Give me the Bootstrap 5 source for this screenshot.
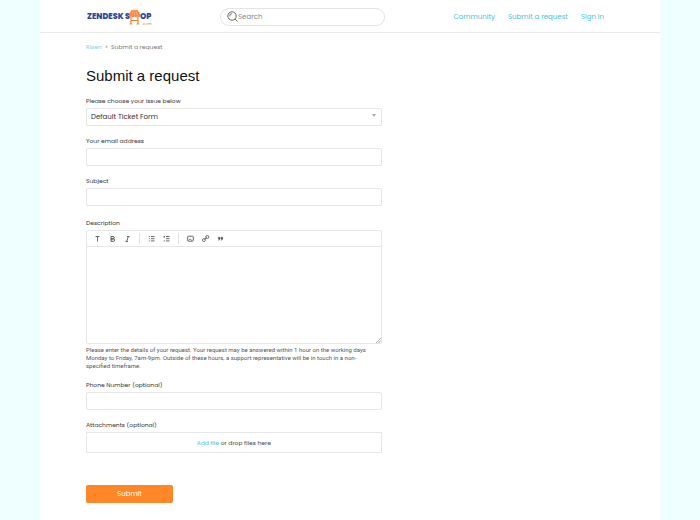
<!DOCTYPE html>
<html lang="en">
<head>
<meta charset="utf-8">
<meta name="viewport" content="width=device-width, initial-scale=1">
<title>Submit a request</title>
<link href="https://cdn.jsdelivr.net/npm/bootstrap@5.3.0/dist/css/bootstrap.min.css" rel="stylesheet">
<style>
body{background:#efffff;font-family:Poppins,Inter,sans-serif;font-size:6px;line-height:10px;color:#444}
a{color:#48c2dc;text-decoration:none}
.shell{margin:0 40px;background:#fff;min-height:100vh}
.site-head{height:33px;border-bottom:1px solid #ebebeb;padding:1px 56px 0 47px}
.logo{position:relative;color:#2c4799;font-weight:800;font-size:8px;flex:0 0 133px}
.logo svg{width:13px;height:16px;margin:0 -1px 0 -2px}
.logo .suffix{position:absolute;left:55px;top:13px;font-size:4px;line-height:4px;color:#f47c30;font-weight:400}
.search{flex:0 0 32%;width:32%;height:18px;border:1px solid #e4e4e4;border-radius:9px;padding:0 6px}
.search svg{flex:none;width:11px;height:11px}
.search input{border:0;outline:0;background:none;font-size:7px;min-width:0;padding:0;color:#555}
.search input::placeholder{color:#888}
.site-nav{gap:13px;font-size:7px;white-space:nowrap}
.content{padding:9px 46px 16px}
.crumbs{color:#777;gap:3px}
.crumbs a{color:#79d3e6}
h1{font-family:"Liberation Sans",Arial,sans-serif;font-size:15px;font-weight:400;line-height:20px;margin:14px 0 0;color:#111}
form{width:56%}
.field{margin-top:10px}
.field label{display:block;margin-bottom:2px;color:#333}
.spaced{margin-top:12px}
.box{display:block;width:100%;height:18px;border:1px solid #e6e6e6;border-radius:2px;background-color:#fff;padding:0 4px;font-size:7px;line-height:14px;color:#333}
.choice{position:relative}
.choice select{appearance:none}
.choice svg{position:absolute;right:6px;top:6px;width:4px;height:3px;pointer-events:none}
.editor{border:1px solid #e6e6e6;border-radius:2px}
.tools{height:16px;border-bottom:1px solid #e6e6e6;padding:0 6px}
.tools button{border:0;background:none;padding:0;width:9px;height:9px;margin-right:6px;line-height:0}
.tools svg{width:9px;height:9px;fill:none;stroke:#555;stroke-width:1}
.tools .bar{width:1px;height:11px;background:#e2e2e2;margin:0 7px 0 1px}
.editor textarea{display:block;width:100%;height:96px;border:0;outline:0;padding:4px;resize:none}
.grip{position:absolute;right:0;bottom:0;width:5px;height:5px}
.hint{font-family:Roboto,sans-serif;font-size:6px;line-height:8px;margin:2px 0 0;padding-right:8px;color:#555}
.drop{height:21px;border:1px solid #e6e6e6}
.send{width:87px;height:18px;margin-top:32px;padding:0;border:0;border-radius:2px;background:#ff8728;color:#fff;font-size:7px;line-height:18px}
.send:hover{background:#f07a1c;color:#fff}
</style>
</head>
<body>
<div class="shell">
  <header class="site-head d-flex align-items-center">
    <a class="logo d-flex align-items-center" href="#" aria-label="Zendesk Shop"><span>ZENDESK&nbsp;S</span><svg viewBox="0 0 13 16" aria-hidden="true"><path d="M3 .8h7v2.400H3z" fill="#ff9a50"/><path d="M2 2.800h9l1.300 3.700a1.400 1.400 0 0 1-2.800.3 1.500 1.500 0 0 1-3 0 1.500 1.500 0 0 1-3 0A1.400 1.400 0 0 1 .7 6.500z" fill="#fb8440"/><path d="M4.500 3L3.800 6.500M6.500 3v3.500M8.500 3l.7 3.500" stroke="#ffc79f" stroke-width=".6"/><path d="M3 7.500V15M10 7.500V15M3 11.500h7" stroke="#f47c30" stroke-width="1.100" fill="none"/><path d="M1.500 15H4.500M8.500 15H11.500" stroke="#f47c30" stroke-width=".9"/></svg><span>OP</span><span class="suffix">.com</span></a>
    <div class="search d-flex align-items-center">
      <svg viewBox="0 0 11 11" fill="none" stroke="#666" stroke-width="1" aria-hidden="true"><circle cx="5" cy="5" r="4.200"/><path d="M8 8l2.500 2.500M2.700 5.300A2.300 2.300 0 0 1 5 2.700" stroke-width=".9"/></svg>
      <input class="flex-fill" type="search" placeholder="Search" aria-label="Search">
    </div>
    <nav class="site-nav d-flex ms-auto"><a href="#">Community</a><a href="#">Submit a request</a><a href="#">Sign in</a></nav>
  </header>
  <main class="content">
    <nav class="crumbs d-flex" aria-label="Breadcrumb"><a href="#">Risen</a><span>&gt;</span><span>Submit a request</span></nav>
    <h1>Submit a request</h1>
    <form>
      <div class="field"><label for="issue">Please choose your issue below</label>
        <div class="choice"><select class="box" id="issue"><option>Default Ticket Form</option></select><svg viewBox="0 0 4 3" aria-hidden="true"><path d="M0 0h4L2 3z" fill="#aaa"/></svg></div></div>
      <div class="field"><label for="email">Your email address</label><input class="box" id="email" type="email"></div>
      <div class="field"><label for="subject">Subject</label><input class="box" id="subject" type="text"></div>
      <div class="field spaced"><label for="description">Description</label>
        <div class="editor position-relative">
          <div class="tools d-flex align-items-center">
            <button type="button" aria-label="Text style"><svg viewBox="0 0 9 9"><path d="M2.500 2.500h4M4.500 2.500V7.500" stroke-width=".9"/></svg></button>
            <button type="button" aria-label="Bold"><svg viewBox="0 0 9 9"><path d="M3 2.500h2a1.200 1.200 0 0 1 0 2.400H3zM3 4.900h2.400a1.200 1.200 0 0 1 0 2.400H3z"/></svg></button>
            <button type="button" aria-label="Italic"><svg viewBox="0 0 9 9"><path d="M4 2.500h2.500M2.500 7.500H5M5.300 2.500L3.700 7.500" stroke-width=".9"/></svg></button>
            <span class="bar"></span>
            <button type="button" aria-label="Bulleted list"><svg viewBox="0 0 9 9"><path d="M1.800 2.500h1M4 2.500h3.500M1.800 4.700h1M4 4.700h3.500M1.800 6.900h1M4 6.900h3.500" stroke-width=".9"/></svg></button>
            <button type="button" aria-label="Numbered list"><svg viewBox="0 0 9 9"><path d="M1.700 2.500h1.200M4 2.500h3.500M2.300 2v1.800M4 4.700h3.500M1.700 6.900h1.200M4 6.900h3.500" stroke-width=".9"/></svg></button>
            <span class="bar"></span>
            <button type="button" aria-label="Image"><svg viewBox="0 0 9 9"><rect x="1.700" y="2.200" width="5.600" height="5" rx=".8" stroke-width=".9"/><path d="M2.500 6.500l1.500-1.700L6 6.500" stroke-width=".7"/></svg></button>
            <button type="button" aria-label="Link"><svg viewBox="0 0 9 9"><rect x="1.500" y="4.700" width="2.800" height="2.800" rx="1.100" stroke-width=".9"/><rect x="4.900" y="1.600" width="2.800" height="2.800" rx="1.100" stroke-width=".9"/><path d="M3.500 5.500l2.200-2.200" stroke-width=".8"/></svg></button>
            <button type="button" aria-label="Quote"><svg viewBox="0 0 9 9"><path d="M2.300 3.200h1.700v1.800L3.200 6.200H2.700L3.100 5H2.300zM5 3.200h1.700v1.800L5.900 6.200H5.400L5.800 5H5z" fill="#555" stroke-width=".4"/></svg></button>
          </div>
          <textarea id="description"></textarea>
          <svg class="grip" viewBox="0 0 5 5" aria-hidden="true"><path d="M0 5l5-5M2.500 5L5 2.500" stroke="#999" stroke-width=".8"/></svg>
        </div>
        <p class="hint">Please enter the details of your request. Your request may be answered within 1 hour on the working days Monday to Friday, 7am-9pm. Outside of these hours, a support representative will be in touch in a non-specified timeframe.</p></div>
      <div class="field"><label for="phone">Phone Number (optional)</label><input class="box" id="phone" type="tel"></div>
      <div class="field"><label for="files">Attachments (optional)</label>
        <div class="drop d-flex align-items-center justify-content-center"><a href="#">Add file</a><span>&nbsp;or drop files here</span><input class="visually-hidden" id="files" type="file" tabindex="-1"></div></div>
      <button class="btn send" type="submit">Submit</button>
    </form>
  </main>
</div>
<script src="https://cdn.jsdelivr.net/npm/bootstrap@5.3.0/dist/js/bootstrap.bundle.min.js"></script>
</body>
</html>
